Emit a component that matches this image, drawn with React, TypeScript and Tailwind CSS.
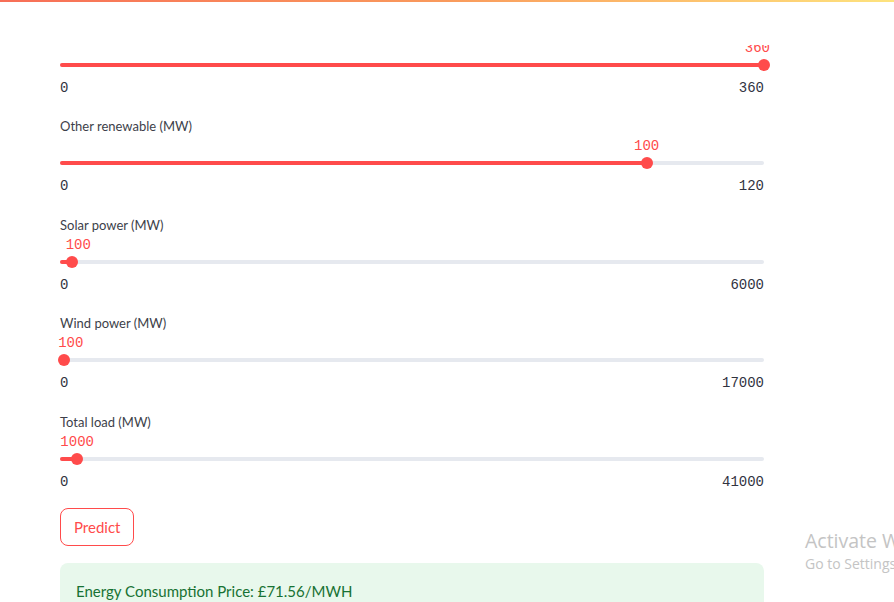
import React from 'react'

type Align = 'left' | 'center' | 'right'

interface SliderProps {
  label?: string
  value: number
  min: number
  max: number
  align: Align
  className?: string
}

const mono = { fontFamily: '"Liberation Mono", "DejaVu Sans Mono", monospace' }

function Slider({ label, value, min, max, align, className }: SliderProps) {
  const pct = ((value - min) / (max - min)) * 100
  const valuePos =
    align === 'center' ? 'left-1/2 -translate-x-1/2' : align === 'left' ? 'left-0' : 'right-0'

  return (
    <div className={`flex flex-col ${className ?? ''}`}>
      <div className="h-[20px] flex items-center text-[13px] text-[#3d3f4a]">{label}</div>
      <div className="h-[18px]" />
      <div className="relative h-[16px] flex items-center">
        <div className="w-full h-[4px] rounded-full bg-[#e6e9ef]">
          <div className="h-full rounded-full bg-[#ff4b4b]" style={{ width: `${pct}%` }} />
        </div>
        <div
          className="absolute top-1/2 -translate-y-1/2 w-[12px] h-[12px] -ml-[6px]"
          style={{ left: `${pct}%` }}
        >
          <div className="w-full h-full rounded-full bg-[#ff4b4b]" />
          <div
            className={`absolute bottom-[14px] ${valuePos} whitespace-nowrap text-[14px] leading-[18px] text-[#ff4b4b]`}
            style={mono}
          >
            {value}
          </div>
        </div>
      </div>
      <div
        className="mt-[5px] h-[21px] flex items-center justify-between text-[14px] text-[#31333f]"
        style={mono}
      >
        <span>{min}</span>
        <span>{max}</span>
      </div>
    </div>
  )
}

const sliders: SliderProps[] = [
  { label: '', value: 360, min: 0, max: 360, align: 'right' },
  { label: 'Other renewable (MW)', value: 100, min: 0, max: 120, align: 'center', className: 'mt-[18px]' },
  { label: 'Solar power (MW)', value: 100, min: 0, max: 6000, align: 'left', className: 'mt-[19px]' },
  { label: 'Wind power (MW)', value: 100, min: 0, max: 17000, align: 'left', className: 'mt-[18px]' },
  { label: 'Total load (MW)', value: 1000, min: 0, max: 41000, align: 'center', className: 'mt-[19px]' },
]

export default function App() {
  return (
    <div
      className="relative w-[894px] h-[602px] overflow-hidden bg-white"
      style={{ fontFamily: 'Lato, "Open Sans", sans-serif' }}
    >
      <div className="h-[2px] bg-gradient-to-r from-[#f76e57] via-[#f99a5c] to-[#fde37e]" />
      <div className="h-[43px] bg-white" />
      <div className="h-[557px] overflow-hidden">
        <div className="ml-[60px] w-[704px] -mt-[26px] flex flex-col">
          {sliders.map((s, i) => (
            <Slider key={i} {...s} />
          ))}
          <button className="mt-[15px] self-start h-[38px] px-[13px] rounded-[8px] border border-[#ff4b4b] text-[15px] text-[#ff4b4b] bg-white">
            Predict
          </button>
          <div className="mt-[17px] rounded-[8px] bg-[#e8f8ec] p-[16px] text-[15px] leading-[24px] text-[#177233]">
            Energy Consumption Price: £71.56/MWH
          </div>
        </div>
      </div>

      {/* windows activation watermark */}
      <div
        className="absolute left-[805px] top-[528px] whitespace-nowrap text-[#c4c4c4]"
        style={{ fontFamily: '"Open Sans", "Noto Sans", sans-serif' }}
      >
        <div className="text-[19.5px] leading-[26px]">Activate Windows</div>
        <div className="text-[14px] leading-[20px]">Go to Settings to activate Windows.</div>
      </div>
    </div>
  )
}
